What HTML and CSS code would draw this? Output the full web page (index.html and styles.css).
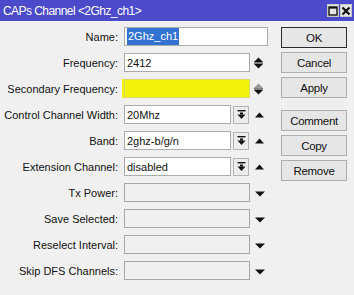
FILE: index.html
```html
<!DOCTYPE html>
<html>
<head>
<meta charset="utf-8">
<link rel="stylesheet" href="styles.css">
</head>
<body>
<div class="window">
  <div class="titlebar">
    <span class="title">CAPs Channel &lt;2Ghz_ch1&gt;</span>
    <div class="tbtns">
      <span class="tbtn"><svg width="10" height="10" viewBox="0 0 10 10"><rect x="1" y="1" width="8" height="8" fill="none" stroke="#111" stroke-width="1.4"/><rect x="1" y="1" width="8" height="1.6" fill="#111"/></svg></span>
      <span class="tbtn"><svg width="10" height="10" viewBox="0 0 10 10"><path d="M1.5 1.5 L8.5 8.5 M8.5 1.5 L1.5 8.5" stroke="#111" stroke-width="2.2"/></svg></span>
    </div>
  </div>
  <div class="content">
    <div class="form">
      <div class="row">
        <label class="lbl">Name:</label>
        <div class="field wide"><span class="sel">2Ghz_ch1</span></div>
      </div>
      <div class="row">
        <label class="lbl">Frequency:</label>
        <div class="field mid">2412</div>
        <span class="spin"><svg width="11" height="16" viewBox="0 0 11 16"><path d="M1 7 L5.5 2.5 L10 7 Z" fill="#111"/><rect x="1" y="7.5" width="9" height="1" fill="#111"/><path d="M1 9 L5.5 13.5 L10 9 Z" fill="#111"/></svg></span>
      </div>
      <div class="row">
        <label class="lbl">Secondary Frequency:</label>
        <div class="field mid yellow"></div>
        <span class="spin"><svg width="11" height="16" viewBox="0 0 11 16"><path d="M1 7 L5.5 2.5 L10 7 Z" fill="#9a9a9a"/><rect x="1" y="7.5" width="9" height="1" fill="#111"/><path d="M1 9 L5.5 13.5 L10 9 Z" fill="#111"/></svg></span>
      </div>
      <div class="row">
        <label class="lbl">Control Channel Width:</label>
        <div class="field short">20Mhz</div>
        <span class="ddbtn"><svg width="9" height="10" viewBox="0 0 9 10"><rect x="0.5" y="0" width="8" height="1.4" fill="#111"/><rect x="3" y="2.5" width="3" height="2" fill="#111"/><path d="M0.5 4.5 L8.5 4.5 L4.5 9 Z" fill="#111"/></svg></span>
        <span class="up"><svg width="9" height="6" viewBox="0 0 9 6"><path d="M0 5.5 L4.5 0.5 L9 5.5 Z" fill="#111"/></svg></span>
      </div>
      <div class="row">
        <label class="lbl">Band:</label>
        <div class="field short">2ghz-b/g/n</div>
        <span class="ddbtn"><svg width="9" height="10" viewBox="0 0 9 10"><rect x="0.5" y="0" width="8" height="1.4" fill="#111"/><rect x="3" y="2.5" width="3" height="2" fill="#111"/><path d="M0.5 4.5 L8.5 4.5 L4.5 9 Z" fill="#111"/></svg></span>
        <span class="up"><svg width="9" height="6" viewBox="0 0 9 6"><path d="M0 5.5 L4.5 0.5 L9 5.5 Z" fill="#111"/></svg></span>
      </div>
      <div class="row">
        <label class="lbl">Extension Channel:</label>
        <div class="field short">disabled</div>
        <span class="ddbtn"><svg width="9" height="10" viewBox="0 0 9 10"><rect x="0.5" y="0" width="8" height="1.4" fill="#111"/><rect x="3" y="2.5" width="3" height="2" fill="#111"/><path d="M0.5 4.5 L8.5 4.5 L4.5 9 Z" fill="#111"/></svg></span>
        <span class="up"><svg width="9" height="6" viewBox="0 0 9 6"><path d="M0 5.5 L4.5 0.5 L9 5.5 Z" fill="#111"/></svg></span>
      </div>
      <div class="row">
        <label class="lbl">Tx Power:</label>
        <div class="field mid disabled"></div>
        <span class="down"><svg width="10" height="6" viewBox="0 0 10 6"><path d="M0 0.5 L10 0.5 L5 5.5 Z" fill="#111"/></svg></span>
      </div>
      <div class="row">
        <label class="lbl">Save Selected:</label>
        <div class="field mid disabled"></div>
        <span class="down"><svg width="10" height="6" viewBox="0 0 10 6"><path d="M0 0.5 L10 0.5 L5 5.5 Z" fill="#111"/></svg></span>
      </div>
      <div class="row">
        <label class="lbl">Reselect Interval:</label>
        <div class="field mid disabled"></div>
        <span class="down"><svg width="10" height="6" viewBox="0 0 10 6"><path d="M0 0.5 L10 0.5 L5 5.5 Z" fill="#111"/></svg></span>
      </div>
      <div class="row">
        <label class="lbl">Skip DFS Channels:</label>
        <div class="field mid disabled"></div>
        <span class="down"><svg width="10" height="6" viewBox="0 0 10 6"><path d="M0 0.5 L10 0.5 L5 5.5 Z" fill="#111"/></svg></span>
      </div>
    </div>
    <div class="buttons">
      <div class="group">
        <button class="btn default">OK</button>
        <button class="btn">Cancel</button>
        <button class="btn">Apply</button>
      </div>
      <div class="group">
        <button class="btn">Comment</button>
        <button class="btn">Copy</button>
        <button class="btn">Remove</button>
      </div>
    </div>
  </div>
</div>
</body>
</html>
```
FILE: styles.css
```css
* { box-sizing: border-box; }
html, body { margin: 0; padding: 0; }
body {
  background: #f0f0f0;
  font-family: "Liberation Sans", Arial, sans-serif;
  color: #111;
}
.window {
  width: 354px;
  height: 295px;
  background: #f0f0f0;
  overflow: hidden;
}
.titlebar {
  height: 21px;
  background: #4a4acb;
  display: flex;
  align-items: center;
  justify-content: space-between;
  padding: 0 2px 0 3px;
}
.title {
  color: #fff;
  font-size: 12px;
  letter-spacing: -0.55px;
}
.tbtns {
  display: flex;
  gap: 1px;
}
.tbtn {
  width: 12px;
  height: 13px;
  background: #e4e4e4;
  border: 1px solid #c8c8c8;
  display: flex;
  align-items: center;
  justify-content: center;
}
.content {
  display: flex;
  padding-top: 6px;
}
.form {
  display: flex;
  flex-direction: column;
  gap: 7px;
  width: 281px;
}
.row {
  display: flex;
  align-items: center;
  height: 19px;
}
.lbl {
  width: 119px;
  text-align: right;
  font-size: 11px;
  padding-right: 1px;
  margin-right: 5px;
  white-space: nowrap;
}
.field {
  height: 19px;
  background: #fff;
  border: 1px solid #ababab;
  font-size: 11px;
  display: flex;
  align-items: center;
  padding-left: 2px;
  white-space: nowrap;
  overflow: hidden;
}
.field.wide { width: 144px; }
.field.mid { width: 126px; }
.field.short { width: 107px; }
.field.disabled { background: #f0f0f0; border-color: #a8a8a8; }
.field.yellow {
  background: #f2f20a;
  border-color: #d8d860;
  box-shadow: -2px 0 0 #f2f20a;
}
.sel {
  background: #3272d2;
  color: #fff;
  padding: 2px 1px;
  line-height: 13px;
}
.spin {
  margin-left: 3px;
  display: flex;
  align-items: center;
}
.ddbtn {
  width: 16px;
  height: 18px;
  margin-left: 2px;
  border: 1px solid #b4b4b4;
  background: #ececec;
  display: flex;
  align-items: center;
  justify-content: center;
}
.up {
  margin-left: 6px;
  display: flex;
  align-items: center;
}
.down {
  margin-left: 5px;
  display: flex;
  align-items: center;
  padding-top: 2px;
}
.buttons {
  display: flex;
  flex-direction: column;
  gap: 12px;
}
.group {
  display: flex;
  flex-direction: column;
  gap: 4px;
}
.btn {
  width: 66px;
  height: 21px;
  background: #e6e6e6;
  border: 1px solid #adadad;
  font-family: "Liberation Sans", Arial, sans-serif;
  font-size: 11.5px;
  letter-spacing: -0.3px;
  color: #111;
  padding: 0;
  margin: 0;
}
.btn.default {
  border: 1px solid #2a2a2a;
  box-shadow: inset 0 0 0 1px #e6e6e6;
}
```
